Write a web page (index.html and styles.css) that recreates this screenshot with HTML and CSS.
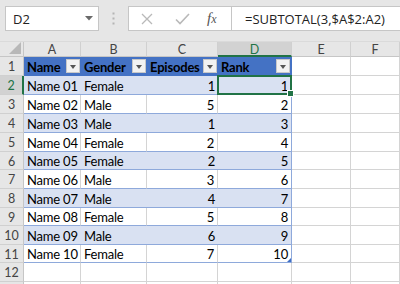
FILE: index.html
```html
<!DOCTYPE html>
<html>
<head>
<meta charset="utf-8">
<link rel="stylesheet" href="styles.css">
</head>
<body>
<div class="app">
  <div class="fbar">
    <div class="namebox">
      <span class="nb-text">D2</span>
      <svg class="nb-caret" width="8" height="5" viewBox="0 0 8 5"><path d="M0 0H8L4 4.5Z" fill="#6a6a6a"/></svg>
    </div>
    <div class="dots">
      <svg width="3" height="13" viewBox="0 0 3 13"><rect x="0.5" y="0.5" width="2" height="2" fill="#b4b4b4"/><rect x="0.5" y="5.5" width="2" height="2" fill="#b4b4b4"/><rect x="0.5" y="10.5" width="2" height="2" fill="#b4b4b4"/></svg>
    </div>
    <div class="fxbox">
      <svg class="ico-x" width="12" height="12" viewBox="0 0 12 12"><path d="M1 1L11 11M11 1L1 11" stroke="#b9b9b9" stroke-width="1.3" fill="none"/></svg>
      <svg class="ico-ok" width="15" height="12" viewBox="0 0 15 12"><path d="M1 6.5L5 10.5L14 1" stroke="#b9b9b9" stroke-width="1.6" fill="none"/></svg>
      <span class="fx">f<span class="fx-x">x</span></span>
    </div>
    <div class="formula">=SUBTOTAL(3,$A$2:A2)</div>
  </div>

  <div class="sheet">
    <div class="corner"><svg width="12" height="12" viewBox="0 0 12 12"><path d="M12 0V12H0Z" fill="#b8b8b8"/></svg></div>
    <div class="ch">A</div>
    <div class="ch">B</div>
    <div class="ch">C</div>
    <div class="ch sel">D</div>
    <div class="ch">E</div>
    <div class="ch">F</div>

    <div class="rh">1</div>
    <div class="th">Name<span class="dd"></span></div>
    <div class="th">Gender<span class="dd"></span></div>
    <div class="th">Episodes<span class="dd"></span></div>
    <div class="th thd">Rank<span class="dd"></span></div>
    <div class="e"></div><div class="e"></div>

    <div class="rh sel">2</div>
    <div class="band">Name 01</div><div class="band">Female</div><div class="band num">1</div><div class="band num d active">1</div>
    <div class="e"></div><div class="e"></div>

    <div class="rh">3</div>
    <div class="wht">Name 02</div><div class="wht">Male</div><div class="wht num">5</div><div class="wht num d">2</div>
    <div class="e"></div><div class="e"></div>

    <div class="rh">4</div>
    <div class="band">Name 03</div><div class="band">Male</div><div class="band num">1</div><div class="band num d">3</div>
    <div class="e"></div><div class="e"></div>

    <div class="rh">5</div>
    <div class="wht">Name 04</div><div class="wht">Female</div><div class="wht num">2</div><div class="wht num d">4</div>
    <div class="e"></div><div class="e"></div>

    <div class="rh">6</div>
    <div class="band">Name 05</div><div class="band">Female</div><div class="band num">2</div><div class="band num d">5</div>
    <div class="e"></div><div class="e"></div>

    <div class="rh">7</div>
    <div class="wht">Name 06</div><div class="wht">Male</div><div class="wht num">3</div><div class="wht num d">6</div>
    <div class="e"></div><div class="e"></div>

    <div class="rh">8</div>
    <div class="band">Name 07</div><div class="band">Male</div><div class="band num">4</div><div class="band num d">7</div>
    <div class="e"></div><div class="e"></div>

    <div class="rh">9</div>
    <div class="wht">Name 08</div><div class="wht">Female</div><div class="wht num">5</div><div class="wht num d">8</div>
    <div class="e"></div><div class="e"></div>

    <div class="rh">10</div>
    <div class="band">Name 09</div><div class="band">Male</div><div class="band num">6</div><div class="band num d">9</div>
    <div class="e"></div><div class="e"></div>

    <div class="rh">11</div>
    <div class="wht">Name 10</div><div class="wht">Female</div><div class="wht num">7</div><div class="wht num d resize">10</div>
    <div class="e"></div><div class="e"></div>

    <div class="rh">12</div>
    <div class="e"></div><div class="e"></div><div class="e"></div><div class="e"></div><div class="e"></div><div class="e"></div>

    <div class="rh"></div>
    <div class="e"></div><div class="e"></div><div class="e"></div><div class="e"></div><div class="e"></div><div class="e"></div>
  </div>
</div>
</body>
</html>
```

FILE: styles.css
```css
* { box-sizing: border-box; }
html, body { margin: 0; padding: 0; background: #ffffff; }
.app {
  width: 400px;
  height: 284px;
  overflow: hidden;
  font-family: "Lato", "Liberation Sans", sans-serif;
}

/* formula bar */
.fbar {
  height: 42px;
  background: #e6e6e6;
  display: flex;
  align-items: flex-start;
  padding-top: 6px;
  border-bottom: 1px solid #dadada;
}
.namebox {
  margin-left: 5px;
  width: 94px;
  height: 25px;
  background: #fff;
  border: 1px solid #c6c6c6;
  display: flex;
  align-items: center;
  padding-left: 7px;
  padding-right: 5px;
}
.nb-text {
  font-family: "Open Sans", "Liberation Sans", sans-serif;
  font-size: 13px;
  color: #222;
}
.nb-caret { margin-left: auto; }
.dots {
  width: 29px;
  height: 25px;
  display: flex;
  align-items: center;
  justify-content: center;
}
.fxbox {
  width: 104px;
  height: 25px;
  background: #fff;
  border: 1px solid #c6c6c6;
  display: flex;
  align-items: center;
  padding-left: 12px;
}
.ico-x { margin-right: 22px; }
.ico-ok { margin-right: 17px; }
.fx {
  font-family: "Liberation Serif", serif;
  font-style: italic;
  font-size: 15px;
  color: #555;
  line-height: 1;
}
.fx-x { font-size: 12px; }
.formula {
  flex: 1;
  height: 25px;
  background: #fff;
  border: 1px solid #c6c6c6;
  border-left: none;
  border-right: none;
  display: flex;
  align-items: center;
  padding-left: 13px;
  font-family: "Open Sans", "Liberation Sans", sans-serif;
  font-size: 13px;
  color: #222;
  white-space: nowrap;
}

/* sheet grid */
.sheet {
  display: grid;
  grid-template-columns: 24px 57px 66px 71px 74px 59px 49px;
  grid-template-rows: 15px 19px 19px 19px 19px 19px 18px 19px 19px 18px 19px 18px 19px 19px;
  font-size: 13px;
  letter-spacing: -0.2px;
  color: #000;
}
.sheet > div {
  display: flex;
  align-items: center;
  white-space: nowrap;
  overflow: visible;
  padding: 1px 3px 0 3px;
  border-right: 1px solid #d4d4d4;
  border-bottom: 1px solid #d4d4d4;
  position: relative;
}
.sheet > .corner {
  background: #e6e6e6;
  border-right: 1px solid #c6c6c6;
  border-bottom: 1px solid #c6c6c6;
  justify-content: flex-end;
  align-items: flex-end;
  padding: 0 2px 2px 0;
}
.sheet > .ch {
  background: #e6e6e6;
  justify-content: center;
  color: #444;
  font-size: 12.5px;
  letter-spacing: 0;
  border-right: 1px solid #d0d0d0;
  border-bottom: 1px solid #c6c6c6;
}
.sheet > .ch.sel {
  background: #d2d2d2;
  color: #217346;
  border-bottom: 2px solid #217346;
}
.sheet > .rh {
  background: #e6e6e6;
  justify-content: center;
  color: #444;
  font-size: 12.5px;
  letter-spacing: 0;
  padding: 1px 0 0 0;
  border-right: 1px solid #c6c6c6;
  border-bottom: 1px solid #d0d0d0;
}
.sheet > .rh.sel {
  background: #d2d2d2;
  color: #217346;
  border-right: 2px solid #217346;
}
.sheet > .th {
  background: #4472c4;
  font-weight: bold;
  border-right: none;
  border-bottom: none;
}
.sheet > .th.thd { border-right: 1px solid #4472c4; }
.dd {
  position: absolute;
  right: 1px;
  top: 2px;
  width: 14px;
  height: 14px;
  background: #f2f2f2;
  border: 1px solid #c8c8c8;
}
.dd::after {
  content: "";
  position: absolute;
  left: 3px;
  top: 5px;
  border-left: 3.5px solid transparent;
  border-right: 3.5px solid transparent;
  border-top: 4px solid #555;
}
.sheet > .band {
  background: #d9e1f2;
  border-right: none;
  border-bottom: 1px solid #8ea9db;
}
.sheet > .wht {
  background: #fff;
  border-bottom: 1px solid #8ea9db;
}
.sheet > .d { border-right: 1px solid #8ea9db; }
.sheet > .num { justify-content: flex-end; }
.active::after {
  content: "";
  position: absolute;
  left: -1px;
  top: -1px;
  right: -1px;
  bottom: -1px;
  border: 2px solid #217346;
}
.active::before {
  content: "";
  position: absolute;
  right: -3px;
  bottom: -3px;
  width: 5px;
  height: 5px;
  background: #217346;
  border: 1px solid #fff;
  z-index: 2;
}
.resize::after {
  content: "";
  position: absolute;
  right: 0;
  bottom: 0;
  border-left: 4px solid transparent;
  border-bottom: 4px solid #3f6fc6;
}
.sheet > .e { background: #fff; }
```
